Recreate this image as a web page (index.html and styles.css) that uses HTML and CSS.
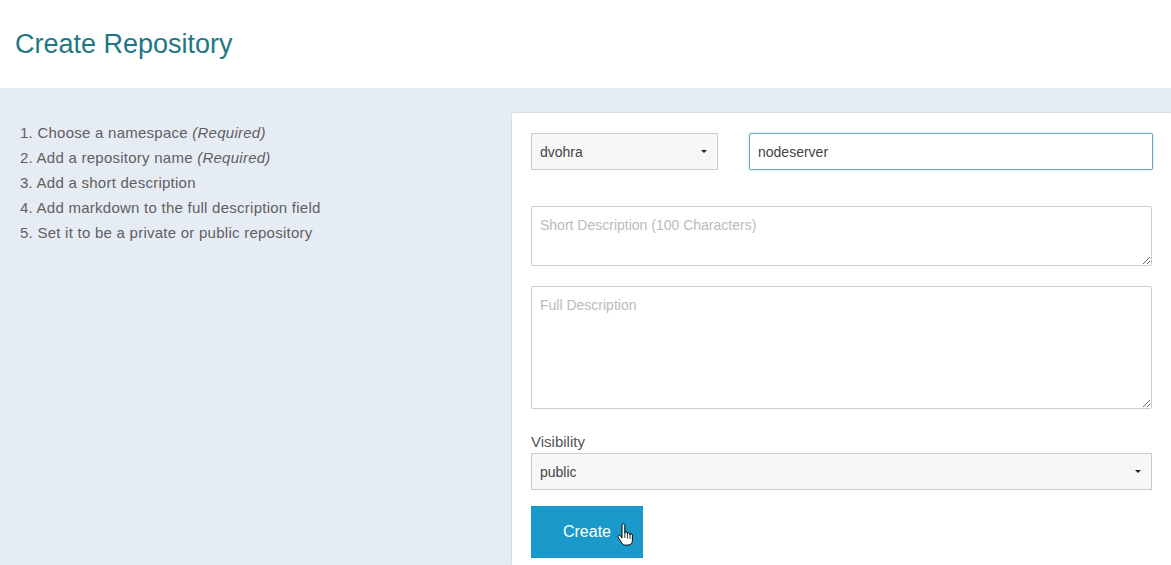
FILE: index.html
```html
<!DOCTYPE html>
<html lang="en">
<head>
  <meta charset="UTF-8" />
  <title>Create Repository</title>
  <link rel="stylesheet" href="styles.css">
</head>
<body>

  <header class="page-head">
    <h1>Create Repository</h1>
  </header>

  <div class="content">
    <ol class="steps">
      <li>Choose a namespace <em>(Required)</em></li>
      <li>Add a repository name <em>(Required)</em></li>
      <li>Add a short description</li>
      <li>Add markdown to the full description field</li>
      <li>Set it to be a private or public repository</li>
    </ol>

    <form class="repo-card">
      <div class="name-row">
        <div class="select namespace">
          <span>dvohra</span>
          <i class="caret"></i>
        </div>
        <input type="text" class="field focused" value="nodeserver" />
      </div>

      <textarea class="field short" placeholder="Short Description (100 Characters)"></textarea>
      <textarea class="field full" placeholder="Full Description"></textarea>

      <label class="label">Visibility</label>
      <div class="select visibility">
        <span>public</span>
        <i class="caret"></i>
      </div>

      <div class="actions">
        <button type="button" class="btn-create">Create</button>
        <svg class="pointer" width="16" height="24" viewBox="0 0 16 24">
          <path d="M5 2.5c0-1 .6-1.6 1.4-1.6S7.8 1.5 7.8 2.5V10c0-.8.6-1.3 1.3-1.3s1.3.5 1.3 1.3v1c0-.8.6-1.3 1.3-1.3s1.3.5 1.3 1.3v1c0-.7.5-1.2 1.2-1.2s1.2.5 1.2 1.2v5.5c0 2.6-1.7 4.6-4.3 4.6H8.5c-1.8 0-2.9-.8-3.8-2.2L1.3 14.6c-.5-.8-.3-1.600.4-2s1.5-.2 2 .5L5 15V2.5z" fill="#fff" stroke="#000" stroke-width="1" stroke-linejoin="round"/>
          <path d="M7.8 10v5M10.4 11v4.5M13 12v4" stroke="#000" stroke-width=".8"/>
        </svg>
      </div>
    </form>
  </div>

</body>
</html>
```

FILE: styles.css
```css
html, body {
  margin: 0;
  padding: 0;
  overflow: hidden;
}

body {
  font-family: "Liberation Sans", Arial, sans-serif;
  background: #e6ecf4;
  color: #555;
  height: 565px;
}

.page-head {
  background: #fff;
  height: 88px;
  display: flex;
  align-items: center;
  padding-left: 15px;
}

.page-head h1 {
  margin: 0;
  font-size: 27px;
  font-weight: normal;
  color: #1f7785;
}

.content {
  display: flex;
  padding-top: 24px;
}

.steps {
  width: 491px;
  margin: 8px 0 0;
  padding: 0 0 0 20px;
  list-style: none;
  counter-reset: step;
  font-size: 15px;
  letter-spacing: 0.25px;
  line-height: 25px;
  color: #606060;
}

.steps li {
  counter-increment: step;
}

.steps li::before {
  content: counter(step) ". ";
}

.repo-card {
  flex: 1;
  margin-right: -2px;
  background: #fff;
  border: 1px solid #d8dde3;
  border-radius: 3px;
  padding: 20px 19px 0 19px;
  height: 433px;
}

.name-row {
  display: flex;
  gap: 31px;
  margin-bottom: 36px;
}

.select {
  box-sizing: border-box;
  height: 37px;
  border: 1px solid #ccc;
  background: #f7f7f7;
  display: flex;
  align-items: center;
  justify-content: space-between;
  padding: 0 10px 0 8px;
  font-size: 14px;
  color: #444;
}

.namespace {
  width: 187px;
}

.caret {
  width: 0;
  height: 0;
  border-left: 3px solid transparent;
  border-right: 3px solid transparent;
  border-top: 3px solid #222;
}

.field {
  box-sizing: border-box;
  display: block;
  border: 1px solid #ccc;
  border-radius: 2px;
  font-family: inherit;
  font-size: 14px;
  color: #444;
  padding: 8px;
  background: #fff;
}

.field::placeholder {
  color: #bbb;
}

.focused {
  flex: 1;
  height: 37px;
  border-color: #6aa9b3;
  box-shadow: 0 0 3px rgba(102, 200, 220, 0.5);
  outline: none;
}

textarea.field {
  width: 621px;
  padding-top: 10px;
  resize: vertical;
}

.short {
  height: 60px;
  margin-bottom: 20px;
}

.full {
  height: 123px;
  margin-bottom: 24px;
}

.label {
  display: block;
  font-size: 15px;
  color: #555;
  margin-bottom: 3px;
}

.visibility {
  width: 621px;
}

.actions {
  position: relative;
  margin-top: 16px;
}

.btn-create {
  width: 112px;
  height: 52px;
  border: none;
  background: #1a9acb;
  color: #fff;
  font-family: inherit;
  font-size: 16px;
}

.pointer {
  position: absolute;
  left: 86px;
  top: 17px;
}
```
